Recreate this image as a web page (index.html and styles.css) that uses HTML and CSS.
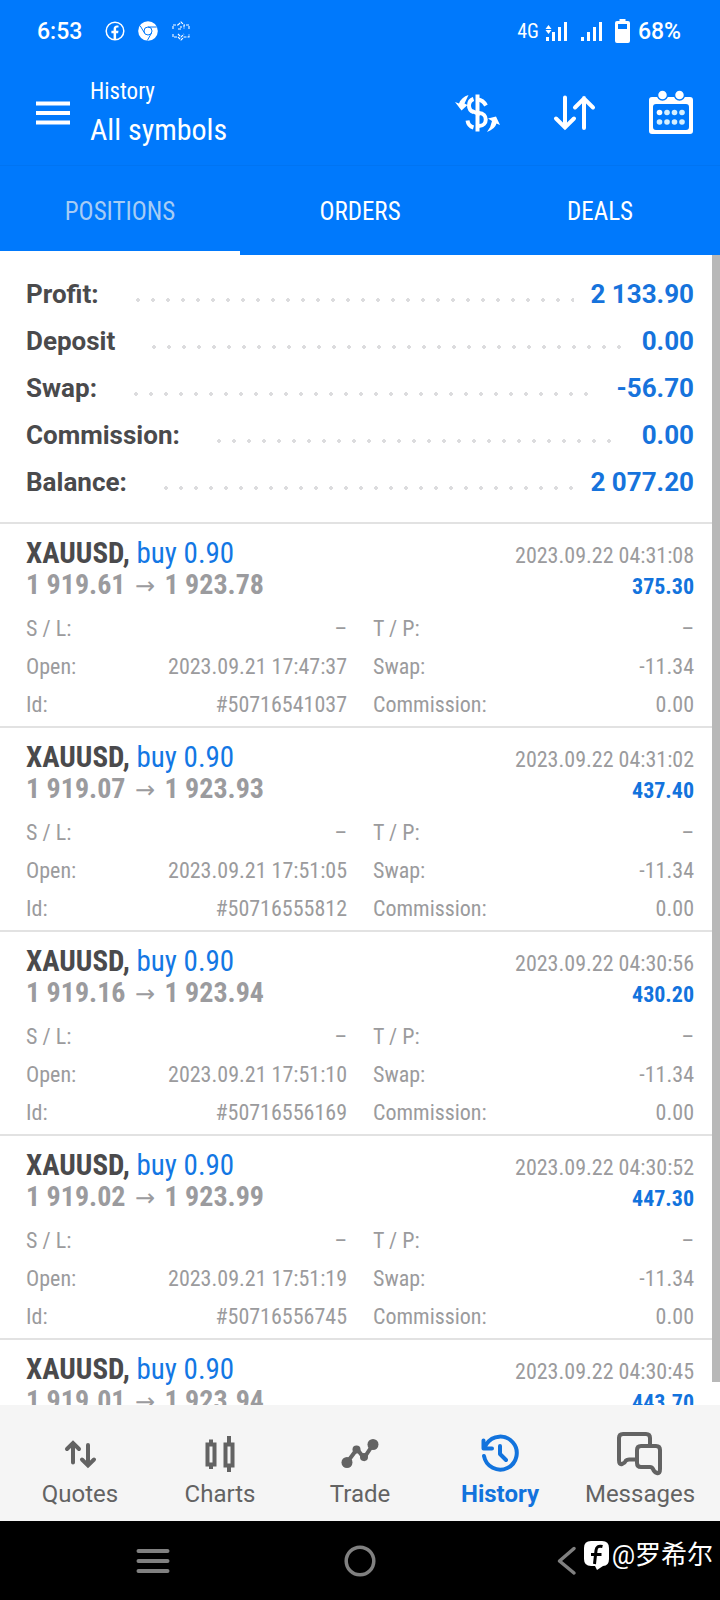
FILE: index.html
```html
<!DOCTYPE html>
<html lang="en">
<head>
<meta charset="utf-8">
<meta name="viewport" content="width=device-width, initial-scale=1">
<title>History</title>
<link rel="stylesheet" href="styles.css">
</head>
<body>
<div class="app">
  <header class="header">
    <div class="status">
      <span class="clock">6:53</span>
      <svg class="status-icon" viewBox="0 0 20 20"><circle cx="10" cy="10" r="8.8" fill="none" stroke="#fff" stroke-width="1.5"/><path d="M8.6 18.5v-6.3H6.4V9.7h2.2V8.1c0-2.4 1.3-3.6 3.4-3.6.8 0 1.5.1 1.5.1v2h-1.1c-1 0-1.3.6-1.3 1.3v1.8h2.4l-.4 2.5h-2v6.3z" fill="#fff"/></svg>
      <svg class="status-icon" viewBox="0 0 20 20"><circle cx="10" cy="10" r="9.8" fill="#fff"/><g fill="none" stroke="#0079fc" stroke-width="1"><circle cx="10" cy="10" r="4"/><path d="M10 6h8.8M6.5 12L2.2 4.8M13.5 12L9.3 19.5"/></g></svg>
      <svg class="status-icon" viewBox="0 0 20 20"><g fill="none" stroke="#fff" stroke-width="1.1" stroke-dasharray="3 1"><path d="M2 8V4h5M18 8V4h-5M7 4l3-3 3 3v4M7 8h3V5M2 13v3l5 0 3 3 3-3 5 0v-3M7 13l3 3 3-3"/></g></svg>
      <span class="network">4G</span>
      <svg class="signal" viewBox="0 0 24 22"><path d="M1 17h3v4H1zM7 12h3v9H7zM13 7h3v14h-3zM19 2h3v19h-3zM3.500 5l3 4h-6zM3.500 14l3-4h-6z" fill="#fff"/></svg>
      <svg class="signal signal-second" viewBox="0 0 24 22"><path d="M1 17h3v4H1zM7 12h3v9H7zM13 7h3v14h-3zM19 2h3v19h-3z" fill="#fff"/></svg>
      <svg class="battery" viewBox="0 0 15 24"><path fill="#fff" fill-rule="evenodd" d="M4.500 0h6v2H13q2 0 2 2v18q0 2-2 2H2q-2 0-2-2V4q0-2 2-2h2.500zM3 5v5h9V5z"/></svg>
      <span class="charge">68%</span>
    </div>
    <div class="toolbar">
      <button class="icon-button" aria-label="Menu"><svg width="34" height="24" viewBox="0 0 34 24"><path d="M0 2.500h34M0 12h34M0 21.500h34" stroke="#fff" stroke-width="4"/></svg></button>
      <div class="titles">
        <div class="section">History</div>
        <h1 class="title">All symbols</h1>
      </div>
      <div class="actions">
        <button class="icon-button" aria-label="Currency"><svg width="48" height="48" viewBox="0 0 48 48"><g fill="none" stroke="#fff"><path d="M22.500 5.500v37" stroke-width="4"/><path d="M18.500 10c-6 2-6 11 0 13M23 10.500q5 .5 8 6M24 24c9 0 9 13 0 13M12.500 31.500c.5 3.500 2.500 6 6 7M17 22l8 3.500" stroke-width="4"/></g><path fill="#fff" d="M13.500 6l-4 8.500 3 1.500-6 5.500L0 13l4 1.500Q6.500 8 13.500 6zM45 36l-4-8.500-8 2 4 2.500q-1 6-5 11 8-3 9.500-8.500z"/></svg></button>
        <button class="icon-button" aria-label="Sort"><svg width="48" height="48" viewBox="0 0 48 48"><path d="M14 8.500v30M5 29.500l9 9 9-9M33 39V9M24 18.500l9-9 9 9" fill="none" stroke="#fff" stroke-width="4" stroke-linecap="round"/></svg></button>
        <button class="icon-button" aria-label="Select period"><svg width="48" height="48" viewBox="0 0 48 48"><path fill="#fff" fill-rule="evenodd" d="M5 8h38q3 0 3 3v31q0 3-3 3H5q-3 0-3-3V11q0-3 3-3zM9 15q-3 0-3 3v20q0 3 3 3h30q3 0 3-3V18q0-3-3-3z"/><g fill="#fff" stroke="#0079fc" stroke-width="1.500"><circle cx="15.500" cy="6" r="5"/><circle cx="32.500" cy="6" r="5"/></g><g fill="#d5f0ff"><circle cx="12.500" cy="23.500" r="2.800" fill="#fff"/><circle cx="20" cy="23.500" r="2.800"/><circle cx="27.500" cy="23.500" r="2.800"/><circle cx="35" cy="23.500" r="2.800"/><circle cx="12.500" cy="33" r="2.800"/><circle cx="20" cy="33" r="2.800"/><circle cx="27.500" cy="33" r="2.800"/><circle cx="35" cy="33" r="2.800"/></g></svg></button>
      </div>
    </div>
    <div class="tabs" role="tablist">
      <button class="tab tab-active" role="tab" aria-selected="true">POSITIONS</button>
      <button class="tab" role="tab" aria-selected="false">ORDERS</button>
      <button class="tab" role="tab" aria-selected="false">DEALS</button>
    </div>
  </header>

  <main class="content">
    <dl class="summary">
      <div class="total"><dt>Profit:</dt><dd>2 133.90</dd></div>
      <div class="total"><dt>Deposit</dt><dd>0.00</dd></div>
      <div class="total total-short"><dt>Swap:</dt><dd>-56.70</dd></div>
      <div class="total total-short"><dt>Commission:</dt><dd>0.00</dd></div>
      <div class="total"><dt>Balance:</dt><dd>2 077.20</dd></div>
    </dl>

    <article class="deal">
      <div class="deal-line"><h2 class="symbol">XAUUSD, <span class="side">buy 0.90</span></h2><time class="closed">2023.09.22 04:31:08</time></div>
      <div class="deal-line"><span class="prices">1 919.61 <span class="arrow">→</span> 1 923.78</span><span class="profit">375.30</span></div>
      <dl class="details">
        <div class="detail"><dt>S / L:</dt><dd>–</dd></div><div class="detail"><dt>T / P:</dt><dd>–</dd></div>
        <div class="detail"><dt>Open:</dt><dd>2023.09.21 17:47:37</dd></div><div class="detail"><dt>Swap:</dt><dd>-11.34</dd></div>
        <div class="detail"><dt>Id:</dt><dd>#50716541037</dd></div><div class="detail"><dt>Commission:</dt><dd>0.00</dd></div>
      </dl>
    </article>
    <article class="deal">
      <div class="deal-line"><h2 class="symbol">XAUUSD, <span class="side">buy 0.90</span></h2><time class="closed">2023.09.22 04:31:02</time></div>
      <div class="deal-line"><span class="prices">1 919.07 <span class="arrow">→</span> 1 923.93</span><span class="profit">437.40</span></div>
      <dl class="details">
        <div class="detail"><dt>S / L:</dt><dd>–</dd></div><div class="detail"><dt>T / P:</dt><dd>–</dd></div>
        <div class="detail"><dt>Open:</dt><dd>2023.09.21 17:51:05</dd></div><div class="detail"><dt>Swap:</dt><dd>-11.34</dd></div>
        <div class="detail"><dt>Id:</dt><dd>#50716555812</dd></div><div class="detail"><dt>Commission:</dt><dd>0.00</dd></div>
      </dl>
    </article>
    <article class="deal">
      <div class="deal-line"><h2 class="symbol">XAUUSD, <span class="side">buy 0.90</span></h2><time class="closed">2023.09.22 04:30:56</time></div>
      <div class="deal-line"><span class="prices">1 919.16 <span class="arrow">→</span> 1 923.94</span><span class="profit">430.20</span></div>
      <dl class="details">
        <div class="detail"><dt>S / L:</dt><dd>–</dd></div><div class="detail"><dt>T / P:</dt><dd>–</dd></div>
        <div class="detail"><dt>Open:</dt><dd>2023.09.21 17:51:10</dd></div><div class="detail"><dt>Swap:</dt><dd>-11.34</dd></div>
        <div class="detail"><dt>Id:</dt><dd>#50716556169</dd></div><div class="detail"><dt>Commission:</dt><dd>0.00</dd></div>
      </dl>
    </article>
    <article class="deal">
      <div class="deal-line"><h2 class="symbol">XAUUSD, <span class="side">buy 0.90</span></h2><time class="closed">2023.09.22 04:30:52</time></div>
      <div class="deal-line"><span class="prices">1 919.02 <span class="arrow">→</span> 1 923.99</span><span class="profit">447.30</span></div>
      <dl class="details">
        <div class="detail"><dt>S / L:</dt><dd>–</dd></div><div class="detail"><dt>T / P:</dt><dd>–</dd></div>
        <div class="detail"><dt>Open:</dt><dd>2023.09.21 17:51:19</dd></div><div class="detail"><dt>Swap:</dt><dd>-11.34</dd></div>
        <div class="detail"><dt>Id:</dt><dd>#50716556745</dd></div><div class="detail"><dt>Commission:</dt><dd>0.00</dd></div>
      </dl>
    </article>
    <article class="deal">
      <div class="deal-line"><h2 class="symbol">XAUUSD, <span class="side">buy 0.90</span></h2><time class="closed">2023.09.22 04:30:45</time></div>
      <div class="deal-line"><span class="prices">1 919.01 <span class="arrow">→</span> 1 923.94</span><span class="profit">443.70</span></div>
    </article>
    <div class="scrollbar"></div>
  </main>

  <nav class="bottom-nav">
    <a class="nav-item" href="#quotes"><svg width="48" height="48" viewBox="0 0 48 48"><path d="M17 33.500V15M11 20l6-6 6 6M32 16v19M26 30.500l6 6 6-6" fill="none" stroke="#636363" stroke-width="4" stroke-linecap="round"/></svg>Quotes</a>
    <a class="nav-item" href="#charts"><svg width="48" height="48" viewBox="0 0 48 48"><path d="M11.500 15.500h7v20h-7zM29.500 15.500h7v21h-7z" fill="none" stroke="#636363" stroke-width="4"/><path d="M15 10.500v4M15 36v4M33 7v8M33 37v6" stroke="#636363" stroke-width="4"/></svg>Charts</a>
    <a class="nav-item" href="#trade"><svg width="48" height="48" viewBox="0 0 48 48"><path d="M11 33.500L21 20l7 9 9-13.500" fill="none" stroke="#636363" stroke-width="4"/><g fill="#636363"><circle cx="11" cy="33.500" r="5.500"/><circle cx="20.500" cy="20.500" r="4"/><circle cx="28" cy="28" r="4"/><circle cx="37" cy="15.500" r="5.500"/></g></svg>Trade</a>
    <a class="nav-item nav-current" href="#history"><svg width="48" height="48" viewBox="0 0 48 48"><g fill="none" stroke="#1273dd" stroke-width="4" stroke-linecap="round" stroke-linejoin="round"><path d="M8 27a16.500 16.500 0 1 0 2.500-12L8 18.500M7.500 11.500v8H16M24 17v8l6 6"/></g></svg>History</a>
    <a class="nav-item" href="#messages"><svg width="48" height="48" viewBox="0 0 48 48"><g fill="none" stroke="#636363" stroke-width="4" stroke-linejoin="round"><path d="M34 15V9q0-4-4-4H7Q3 5 3 9v22q0 5 3 4 3-1 4-3.500 1-1 3-1h6"/><path d="M25 17h15q4 0 4 4v19q0 5-3 4-3-1-4-4-1-2-3-2h-9q-4 0-4-4V21q0-4 4-4z"/></g></svg>Messages</a>
  </nav>

  <footer class="system-bar">
    <button class="icon-button" aria-label="Recent apps"><svg width="34" height="32" viewBox="0 0 34 32"><path d="M2.500 6h29M2.500 16h29M2.500 26h29" stroke="#808080" stroke-width="4" stroke-linecap="round"/></svg></button>
    <button class="icon-button" aria-label="Home"><svg width="34" height="32" viewBox="0 0 34 32"><circle cx="17" cy="16" r="13.800" fill="none" stroke="#808080" stroke-width="3.500"/></svg></button>
    <button class="icon-button" aria-label="Back"><svg width="34" height="32" viewBox="0 0 34 32"><path d="M24 3.500L9.500 16 24 28" fill="none" stroke="#808080" stroke-width="3.500" stroke-linecap="round" stroke-linejoin="round"/></svg></button>
    <div class="credit">
      <svg width="25" height="29" viewBox="0 0 25 29"><path fill="#fff" d="M7 0h11q7 0 7 7v11q0 7-6 7l-6 4-2-4H7q-7 0-7-7V7q0-7 7-7z"/><path d="M18.500 5.500q-6-1.500-6.500 4L10.500 23M7 13.500h10.500" fill="none" stroke="#000" stroke-width="3"/></svg>
      <span>@罗希尔</span>
    </div>
  </footer>
</div>
</body>
</html>
```
FILE: styles.css
```css
* { box-sizing: border-box; }
body, h1, h2, dl, dd { margin: 0; }
body {
  background: #fff;
  font-family: Roboto, sans-serif;
  color: #4a4a4c;
}
button { margin: 0; padding: 0; border: 0; background: none; font: inherit; color: inherit; }
a { color: inherit; text-decoration: none; }
svg { display: block; flex: none; }
h1, h2 { font-size: inherit; font-weight: 400; }

.app { height: 100vh; display: flex; flex-direction: column; }

.header { flex: none; background: #0079fc; color: #fff; }
.status { display: flex; align-items: center; height: 62px; padding: 0 39px 0 37px; }
.clock, .charge { font-size: 23px; font-weight: 500; }
.clock { margin-right: 10px; }
.status-icon { width: 20px; height: 20px; margin-left: 13px; }
.network { margin-left: auto; margin-right: 6px; font-family: "Roboto Condensed", Roboto, sans-serif; font-size: 20px; }
.signal { width: 24px; height: 22px; }
.signal-second { margin-left: 11px; }
.battery { width: 15px; height: 24px; margin: 0 8px 0 11px; }

.toolbar, .tabs, .deal { font-family: "Roboto Condensed", Roboto, sans-serif; }
.toolbar { display: flex; align-items: center; height: 104px; padding: 0 25px 2px 36px; border-bottom: 1px solid #0074f2; }
.titles { flex: 1; margin-left: 20px; margin-bottom: 3px; line-height: 38px; }
.section { font-size: 23px; }
.title { font-size: 30px; }
.actions { display: flex; gap: 48px; }

.tabs { display: grid; grid-template-columns: repeat(3, 1fr); height: 89px; }
.tab { padding-top: 2px; border-top: 4px solid transparent; border-bottom: 4px solid transparent; font-size: 25px; }
.tab-active { border-bottom-color: #fff; color: #a6ccf5; }

.content { position: relative; flex: 1; min-height: 0; overflow: hidden; }
.summary { padding: 16px 26px; border-bottom: 2px solid #e2e2e2; font-size: 26px; font-weight: 700; }
.total { display: flex; line-height: 47px; }
.total::before {
  content: "";
  order: 1;
  flex: 1;
  height: 4px;
  margin: 27px 16px 0 37px;
  background: radial-gradient(circle at 2px 2px, #dcdcde 2px, transparent 2px) 0 0 / 15px 4px repeat-x;
}
.total-short::before { margin-right: 28px; }
.total dd { order: 2; color: #1673dc; }

.deal { padding: 13px 26px 2px; border-bottom: 2px solid #e2e2e2; }
.deal-line { display: flex; align-items: baseline; justify-content: space-between; height: 32px; font-size: 29px; line-height: 32px; white-space: nowrap; }
.symbol { font-weight: 700; }
.side { font-weight: 400; color: #1377e4; }
.prices { font-size: 28px; font-weight: 700; color: #9b9b9e; }
.arrow { margin: 0 3px; font-family: "DejaVu Sans", sans-serif; font-size: 24px; font-weight: 400; line-height: 1; }
.closed, .profit { font-size: 22px; }
.closed { color: #9b9b9d; }
.profit { font-weight: 700; color: #1273dd; }
.details { display: grid; grid-template-columns: 1fr 1fr; column-gap: 26px; margin-top: 9px; font-size: 22px; line-height: 38px; color: #9b9b9d; }
.detail { display: flex; justify-content: space-between; }

.scrollbar { position: absolute; top: 0; right: 0; width: 8px; height: 98%; background: #b8b8b8; }

.bottom-nav { flex: none; display: grid; grid-template-columns: repeat(5, 1fr); padding: 24px 10px 12px; background: #f5f5f5; color: #636363; }
.nav-item { display: flex; flex-direction: column; align-items: center; gap: 2px; font-size: 24px; line-height: 30px; }
.nav-current { color: #1273dd; font-weight: 700; }

.system-bar { position: relative; flex: none; display: grid; grid-template-columns: repeat(3, 1fr); justify-items: center; height: 79px; padding: 0 50px; background: #000; }
.credit { position: absolute; right: 7px; top: 16px; display: flex; align-items: center; gap: 3px; color: #fff; font-family: Roboto, "Noto Sans CJK SC", sans-serif; font-size: 26px; line-height: 36px; }
```
